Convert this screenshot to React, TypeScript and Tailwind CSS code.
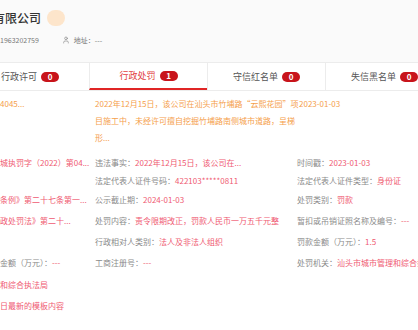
import { User } from 'lucide-react'

type Field = { label?: string; value: string }

type Row = { h: string; left?: Field; mid?: Field; right?: Field }

const tabs = [
  { name: '行政许可', count: 0 },
  { name: '行政处罚', count: 1, active: true },
  { name: '守信红名单', count: 0 },
  { name: '失信黑名单', count: 0 },
]

// detail rows — spacing in the screenshot is a bit uneven, so heights are per row
const rows: Row[] = [
  {
    h: 'h-[18px]',
    left: { value: '城执罚字（2022）第04...' },
    mid: { label: '违法事实：', value: '2022年12月15日，该公司在...' },
    right: { label: '时间戳：', value: '2023-01-03' },
  },
  {
    h: 'h-[18px]',
    mid: { label: '法定代表人证件号码：', value: '422103*****0811' },
    right: { label: '法定代表人证件类型：', value: '身份证' },
  },
  {
    h: 'h-[20px]',
    left: { value: '条例》第二十七条第一...' },
    mid: { label: '公示截止期：', value: '2024-01-03' },
    right: { label: '处罚类别：', value: '罚款' },
  },
  {
    h: 'h-[21px]',
    left: { value: '政处罚法》第二十...' },
    mid: { label: '处罚内容：', value: '责令限期改正，罚款人民币一万五千元整' },
    right: { label: '暂扣或吊销证照名称及编号：', value: '---' },
  },
  {
    h: 'h-[21px]',
    mid: { label: '行政相对人类别：', value: '法人及非法人组织' },
    right: { label: '罚款金额（万元）：', value: '1.5' },
  },
  {
    h: 'h-[22px]',
    left: { label: '金额（万元）：', value: '---' },
    mid: { label: '工商注册号：', value: '---' },
    right: { label: '处罚机关：', value: '汕头市城市管理和综合执法局' },
  },
  { h: 'h-[21px]', left: { value: '和综合执法局' } },
  { h: 'h-[22px]', left: { value: '日最新的模板内容' } },
]

function Cell({ field }: { field?: Field }) {
  if (!field) return null
  return (
    <span className="whitespace-nowrap">
      {field.label && <span className="text-[#8a8a8a]">{field.label}</span>}
      <span className="text-[#ef5a72]">{field.value}</span>
    </span>
  )
}

export default function App() {
  return (
    <div className="relative h-[330px] w-[418px] overflow-hidden bg-white font-['Noto_Sans_CJK_SC','Noto_Sans',sans-serif]">
      {/* Company header */}
      <div className="h-[62px] bg-[#fafafa]">
        <div className="flex items-center gap-[6px] pt-[9px]">
          <span className="-ml-[7px] text-[12px] leading-[18px] font-medium text-[#333]">
            有限公司
          </span>
          <span className="h-[16px] w-[18px] rounded-full bg-[#fde5cb]" />
        </div>
        <div className="mt-[8px] flex items-center text-[7px] leading-[10px] text-[#777]">
          <span>1963202759</span>
          <User className="ml-[23px] h-[8px] w-[8px] text-[#888]" strokeWidth={2} />
          <span className="ml-[4px]">地址：---</span>
        </div>
      </div>

      {/* Tabs */}
      <div className="-ml-[29px] flex h-[29px] border-y border-[#ececec] bg-white">
        {tabs.map((t, i) => (
          <div
            key={t.name}
            className={`flex w-[118px] shrink-0 items-center justify-center gap-[4px] ${
              i > 0 ? 'border-l border-[#ececec]' : ''
            } ${t.active ? 'border-b-2 border-b-[#e02525]' : ''}`}
          >
            <span
              className={`text-[9px] leading-none ${t.active ? 'text-[#e2403f]' : 'text-[#555]'}`}
            >
              {t.name}
            </span>
            <span className="flex h-[10px] w-[18px] items-center justify-center rounded-full bg-[#c8141b] text-[8px] font-bold leading-none text-white">
              {t.count}
            </span>
          </div>
        ))}
      </div>

      {/* Record */}
      <div className="pt-[4px] text-[8px]">
        <div className="flex leading-[17px] text-[#f5a04b]">
          <div className="w-[95px] shrink-0">4045...</div>
          <div className="w-[202px] shrink-0 whitespace-nowrap">
            <div>2022年12月15日，该公司在汕头市竹埔路“云熙花园”项</div>
            <div>目施工中，未经许可擅自挖掘竹埔路南侧城市道路，呈梯</div>
            <div>形...</div>
          </div>
          <div className="ml-[2px] whitespace-nowrap">2023-01-03</div>
        </div>

        <div className="mt-[8px]">
          {rows.map((r, i) => (
            <div key={i} className={`flex items-center ${r.h}`}>
              <div className="w-[95px] shrink-0">
                <Cell field={r.left} />
              </div>
              <div className="w-[202px] shrink-0">
                <Cell field={r.mid} />
              </div>
              <div>
                <Cell field={r.right} />
              </div>
            </div>
          ))}
        </div>
      </div>
    </div>
  )
}
